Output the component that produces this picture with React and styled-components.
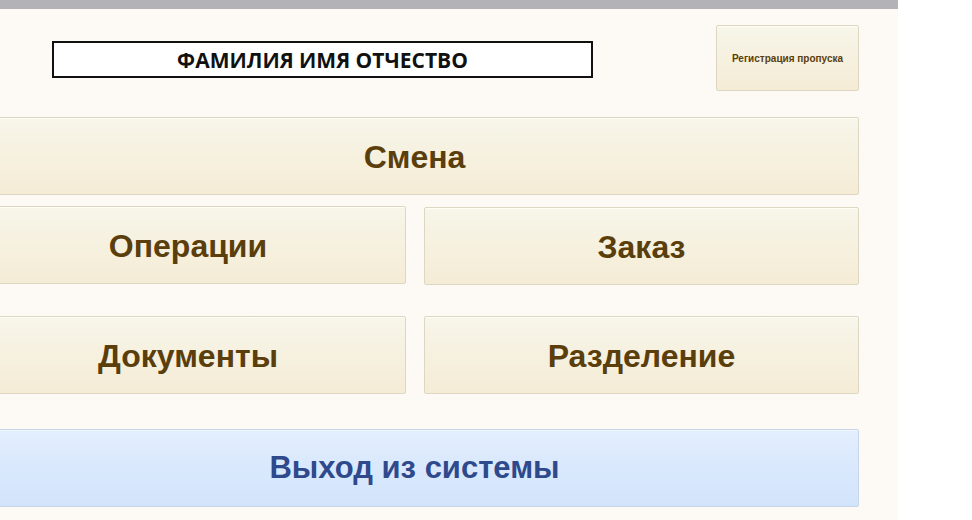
import React from "react";
import styled, { createGlobalStyle } from "styled-components";

const GlobalStyle = createGlobalStyle`
  html, body {
    margin: 0;
    padding: 0;
    background: #ffffff;
  }
  body {
    font-family: "Liberation Sans", Arial, sans-serif;
  }
`;

function App() {
  return (
    <>
      <GlobalStyle />
      <Screen>
        <TopBar />
        <Header>
          <NameBox>ФАМИЛИЯ ИМЯ ОТЧЕСТВО</NameBox>
          <MenuButton $small>Регистрация пропуска</MenuButton>
        </Header>
        <Menu>
          <MenuButton>Смена</MenuButton>
          <Row $gapTop={11}>
            <MenuButton>Операции</MenuButton>
            <MenuButton $shift>Заказ</MenuButton>
          </Row>
          <Row $gapTop={31}>
            <MenuButton>Документы</MenuButton>
            <MenuButton>Разделение</MenuButton>
          </Row>
          <ExitButton>Выход из системы</ExitButton>
        </Menu>
      </Screen>
    </>
  );
}

const Screen = styled.div`
  width: 898px;
  height: 520px;
  background: #fdfaf5;
  overflow: hidden;
`;

const TopBar = styled.div`
  height: 9px;
  background: #b3b2b6;
`;

const Header = styled.div`
  display: flex;
  align-items: flex-start;
  padding: 16px 0 0 52px;
  gap: 123px;
`;

const NameBox = styled.div`
  box-sizing: border-box;
  width: 541px;
  height: 37px;
  margin-top: 16px;
  border: 2px solid #111;
  background: #ffffff;
  display: flex;
  align-items: center;
  justify-content: center;
  font-family: "Open Sans", "DejaVu Sans", sans-serif;
  font-weight: 700;
  font-size: 21px;
  color: #111;
`;

const MenuButton = styled.div`
  box-sizing: border-box;
  height: ${(p) => (p.$small ? "66px" : "78px")};
  width: ${(p) => (p.$small ? "143px" : "auto")};
  margin-top: ${(p) => (p.$shift ? "1px" : "0")};
  padding-top: ${(p) => (p.$small ? "0" : "2px")};
  display: flex;
  align-items: center;
  justify-content: center;
  border: 1px solid #ddd6c2;
  border-radius: 2px;
  background: linear-gradient(to bottom, #f7f6ea 0%, #f6f1e0 45%, #f5ecd6 100%);
  box-shadow: inset 0 1px 0 #fffdf4;
  color: #5a3e0b;
  font-family: "Liberation Sans", Arial, sans-serif;
  font-weight: 700;
  font-size: ${(p) => (p.$small ? "10px" : "32px")};
  cursor: pointer;
`;

const Menu = styled.div`
  display: flex;
  flex-direction: column;
  margin: 26px 0 0 -30px;
  width: 889px;
`;

const Row = styled.div`
  display: grid;
  grid-template-columns: 436px 435px;
  gap: 18px;
  margin-top: ${(p) => p.$gapTop}px;
`;

const ExitButton = styled.div`
  box-sizing: border-box;
  height: 78px;
  margin-top: 35px;
  display: flex;
  align-items: center;
  justify-content: center;
  border: 1px solid #c6d5ea;
  border-radius: 2px;
  background: linear-gradient(to bottom, #e4effd 0%, #dbe9fd 40%, #d2e4fb 100%);
  box-shadow: inset 0 1px 0 #f2f7ff;
  color: #2f4a8c;
  font-family: "Liberation Sans", Arial, sans-serif;
  font-weight: 700;
  font-size: 31px;
  cursor: pointer;
`;

export default App;
